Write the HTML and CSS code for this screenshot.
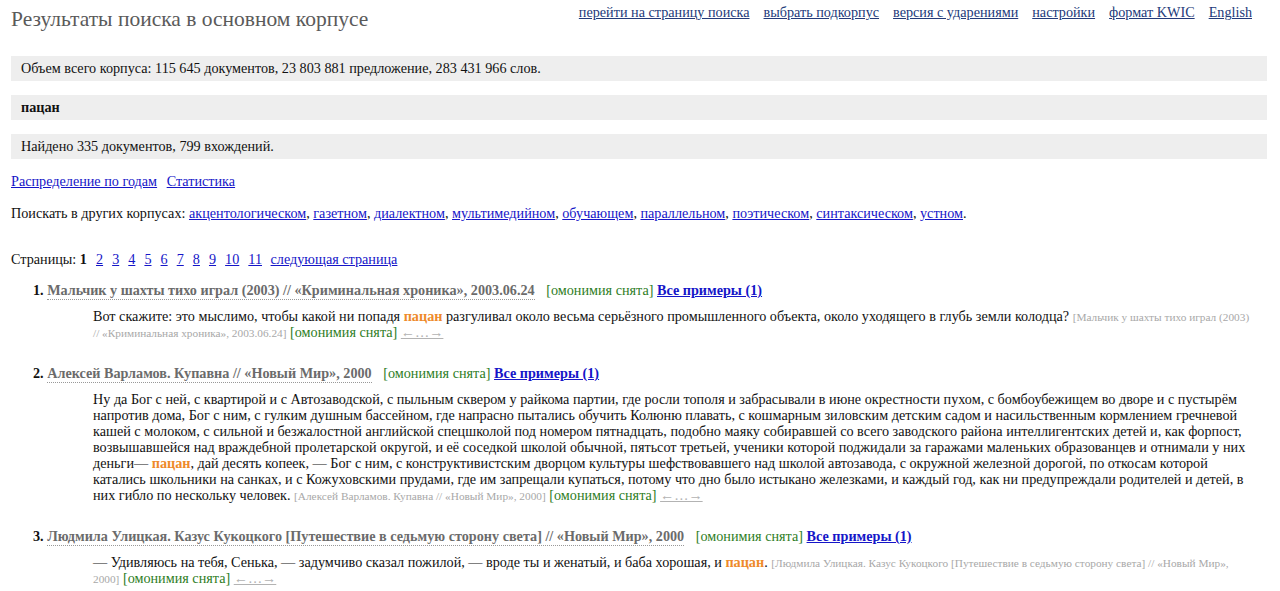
FILE: index.html
```html
<!DOCTYPE html>
<html lang="ru">
<head>
<meta charset="utf-8">
<title>Результаты поиска в основном корпусе</title>
<link rel="stylesheet" href="styles.css">
</head>
<body>
<div class="page">
  <header class="header">
    <h1 class="title">Результаты поиска в основном корпусе</h1>
    <nav class="topnav">
      <a href="#">перейти на страницу поиска</a>
      <a href="#">выбрать подкорпус</a>
      <a href="#">версия с ударениями</a>
      <a href="#">настройки</a>
      <a href="#">формат KWIC</a>
      <a href="#">English</a>
    </nav>
  </header>

  <div class="box">Объем всего корпуса: 115 645 документов, 23 803 881 предложение, 283 431 966 слов.</div>
  <div class="box"><b>пацан</b></div>
  <div class="box">Найдено 335 документов, 799 вхождений.</div>

  <p class="links"><a href="#">Распределение по годам</a> <a href="#">Статистика</a></p>

  <p class="other">Поискать в других корпусах: <a href="#">акцентологическом</a>, <a href="#">газетном</a>, <a href="#">диалектном</a>, <a href="#">мультимедийном</a>, <a href="#">обучающем</a>, <a href="#">параллельном</a>, <a href="#">поэтическом</a>, <a href="#">синтаксическом</a>, <a href="#">устном</a>.</p>

  <p class="pages">Страницы: <b>1</b> <a href="#">2</a> <a href="#">3</a> <a href="#">4</a> <a href="#">5</a> <a href="#">6</a> <a href="#">7</a> <a href="#">8</a> <a href="#">9</a> <a href="#">10</a> <a href="#">11</a> <a href="#" class="next">следующая страница</a></p>

  <ol class="results">
    <li class="result">
      <div class="rhead"><span class="num">1.</span> <span class="doc">Мальчик у шахты тихо играл (2003) // «Криминальная хроника», 2003.06.24</span> <span class="hom">[омонимия снята]</span> <a href="#" class="all">Все примеры (1)</a></div>
      <div class="rbody">Вот скажите: это мыслимо, чтобы какой ни попадя <span class="hit">пацан</span> разгуливал около весьма серьёзного промышленного объекта, около уходящего в глубь земли колодца? <span class="src">[Мальчик у шахты тихо играл (2003) // «Криминальная хроника», 2003.06.24]</span> <span class="hom">[омонимия снята]</span> <a href="#" class="ctx">←…→</a></div>
    </li>
    <li class="result">
      <div class="rhead"><span class="num">2.</span> <span class="doc">Алексей Варламов. Купавна // «Новый Мир», 2000</span> <span class="hom">[омонимия снята]</span> <a href="#" class="all">Все примеры (1)</a></div>
      <div class="rbody">Ну да Бог с ней, с квартирой и с Автозаводской, с пыльным сквером у райкома партии, где росли тополя и забрасывали в июне окрестности пухом, с бомбоубежищем во дворе и с пустырём напротив дома, Бог с ним, с гулким душным бассейном, где напрасно пытались обучить Колюню плавать, с кошмарным зиловским детским садом и насильственным кормлением гречневой кашей с молоком, с сильной и безжалостной английской спецшколой под номером пятнадцать, подобно маяку собиравшей со всего заводского района интеллигентских детей и, как форпост, возвышавшейся над враждебной пролетарской округой, и её соседкой школой обычной, пятьсот третьей, ученики которой поджидали за гаражами маленьких образованцев и отнимали у них деньги— <span class="hit">пацан</span>, дай десять копеек, — Бог с ним, с конструктивистским дворцом культуры шефствовавшего над школой автозавода, с окружной железной дорогой, по откосам которой катались школьники на санках, и с Кожуховскими прудами, где им запрещали купаться, потому что дно было истыкано железками, и каждый год, как ни предупреждали родителей и детей, в них гибло по нескольку человек. <span class="src">[Алексей Варламов. Купавна // «Новый Мир», 2000]</span> <span class="hom">[омонимия снята]</span> <a href="#" class="ctx">←…→</a></div>
    </li>
    <li class="result">
      <div class="rhead"><span class="num">3.</span> <span class="doc">Людмила Улицкая. Казус Кукоцкого [Путешествие в седьмую сторону света] // «Новый Мир», 2000</span> <span class="hom">[омонимия снята]</span> <a href="#" class="all">Все примеры (1)</a></div>
      <div class="rbody">— Удивляюсь на тебя, Сенька, — задумчиво сказал пожилой, — вроде ты и женатый, и баба хорошая, и <span class="hit">пацан</span>. <span class="src">[Людмила Улицкая. Казус Кукоцкого [Путешествие в седьмую сторону света] // «Новый Мир», 2000]</span> <span class="hom">[омонимия снята]</span> <a href="#" class="ctx">←…→</a></div>
    </li>
  </ol>
</div>
</body>
</html>
```

FILE: styles.css
```css
html, body {
  margin: 0;
  padding: 0;
  background: #fff;
}
body {
  font-family: "Liberation Serif", "Times New Roman", serif;
  font-size: 14.2px;
  line-height: 16px;
  color: #111;
}
a {
  color: #1515c8;
}
.page {
  padding: 0 13px 0 11px;
}
.header {
  display: flex;
  justify-content: space-between;
  align-items: flex-start;
}
.title {
  margin: 7px 0 0 0;
  font-size: 21.5px;
  line-height: 24px;
  font-weight: normal;
  color: #5a5a5a;
}
.topnav {
  display: flex;
  gap: 14px;
  padding: 4px 15px 0 0;
}
.topnav a {
  color: #233a7a;
}
.box {
  background: #eeeeee;
  height: 25px;
  line-height: 25px;
  padding: 0 10px;
  margin-top: 14px;
}
.header + .box {
  margin-top: 25px;
}
.links {
  margin: 14px 0 0 0;
}
.links a + a {
  margin-left: 6px;
}
.other {
  margin: 16px 0 0 0;
}
.pages {
  margin: 30px 0 0 0;
}
.pages a {
  margin-left: 5.5px;
}
.pages .next {
  margin-left: 5px;
}
.results {
  list-style: none;
  margin: 15px 0 0 0;
  padding: 0;
}
.result {
  margin-bottom: 25px;
}
.rhead {
  padding-left: 22px;
  font-weight: bold;
}
.num {
  color: #111;
}
.doc {
  color: #6b6b6b;
  border-bottom: 1px dotted #999;
  padding-bottom: 1px;
}
.hom {
  color: #2e7d1e;
  font-weight: normal;
}
.rhead .hom {
  margin-left: 8px;
}
.all {
  font-weight: bold;
}
.rbody {
  margin: 10px 0 0 82px;
  padding-right: 10px;
}
.hit {
  color: #ee8a2a;
  font-weight: bold;
}
.src {
  color: #a8a8a8;
  font-size: 11.3px;
  line-height: 0;
}
.ctx {
  color: #b3b3b3;
  line-height: 0;
}
```
